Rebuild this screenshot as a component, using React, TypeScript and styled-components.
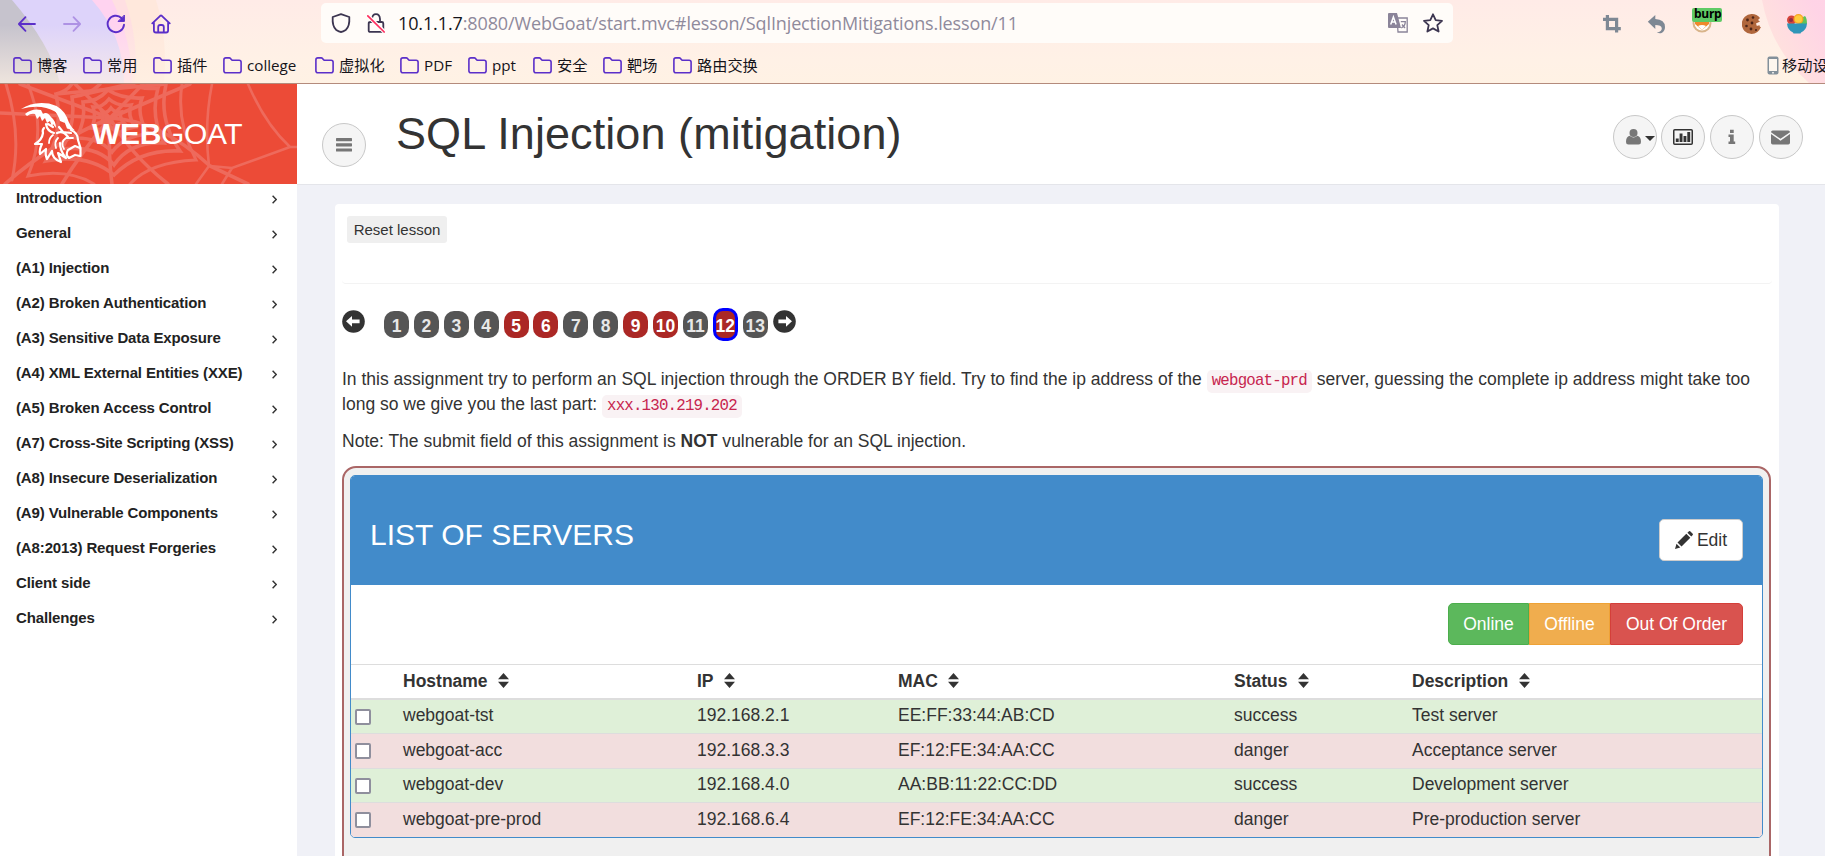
import React from "react";
import styled, { createGlobalStyle } from "styled-components";

const GlobalStyle = createGlobalStyle`
  * { box-sizing: border-box; }
  body { margin: 0; background: #f0f1f7; overflow: hidden; }
`;

const SANS = `"Liberation Sans", Arial, sans-serif`;
const UI = `"Open Sans", "Noto Sans CJK SC", sans-serif`;

const Window = styled.div`
  width: 1825px;
  height: 856px;
  overflow: hidden;
  display: flex;
  flex-direction: column;
  font-family: ${SANS};
  color: #333;
`;

/* ---------- browser chrome ---------- */

const Chrome = styled.header`
  position: relative;
  flex: none;
  height: 84px;
  border-bottom: 1px solid #b48b7c;
  background: linear-gradient(#ffebe7 0, #fff1e6 60px, #fff2e4 83px);
`;

const Backdrop = styled.svg`
  position: absolute;
  inset: 0;
`;

const Toolbar = styled.div`
  position: relative;
  display: flex;
  align-items: center;
  height: 47px;
  padding: 0 17px 0 17px;
`;

const NavGroup = styled.div`
  display: flex;
  gap: 24.7px;
  width: 304px;
  flex: none;
`;

const UrlBar = styled.div`
  display: flex;
  align-items: center;
  width: 1132px;
  height: 40px;
  margin-top: -1px;
  padding: 0 10px 0 10px;
  border-radius: 5px;
  background: #fffcf9;
  flex: none;
`;

const LockIcon = styled.svg`
  margin-left: 16px;
`;

const Url = styled.div`
  flex: 1;
  margin-left: 13px;
  font: 18px/24px ${UI};
  letter-spacing: -0.12px;
  color: #8f8a9c;
  white-space: nowrap;
  b { font-weight: 400; color: #15141a; }
`;

const UrlIcons = styled.div`
  display: flex;
  gap: 15px;
`;

const Extensions = styled.div`
  display: flex;
  flex: none;
  align-items: center;
  gap: 25px;
  margin-left: 149px;
`;

const BurpBox = styled.div`
  position: relative;
  width: 25px;
  height: 20px;
`;

const BurpBadge = styled.span`
  position: absolute;
  left: 0;
  top: -6px;
  width: 30px;
  height: 14px;
  padding-left: 2px;
  border-radius: 2px;
  background: #5fca66;
  color: #000;
  font: 700 12px/12px ${UI};
  letter-spacing: -0.3px;
`;

const Bookmarks = styled.nav`
  position: relative;
  display: flex;
  align-items: center;
  height: 36px;
  padding-left: 13px;
`;

const Bookmark = styled.div<{ $w: number }>`
  display: flex;
  align-items: center;
  gap: 5px;
  width: ${(p) => p.$w}px;
  flex: none;
  font: 15.2px/20px ${UI};
  color: #15141a;
  white-space: nowrap;
  svg { flex: none; }
`;

const MobileBookmark = styled(Bookmark)`
  gap: 3px;
  margin-left: auto;
`;

/* ---------- site frame ---------- */

const Site = styled.div`
  display: flex;
  flex: 1;
  min-height: 0;
`;

const Sidebar = styled.aside`
  width: 297px;
  flex: none;
  background: #fff;
`;

const Brand = styled.div`
  position: relative;
  height: 100px;
  background: #ec4b37;
  display: flex;
  align-items: center;
  padding-left: 19px;
  gap: 10px;
`;

const WebArt = styled.svg`
  position: absolute;
  inset: 0;
`;

const BrandMark = styled.svg`
  position: relative;
`;

const BrandName = styled.div`
  position: relative;
  color: #fff;
  font-size: 30px;
  letter-spacing: -0.35px;
  line-height: 36px;
`;

const Menu = styled.ul`
  list-style: none;
  margin: -1px 0 0;
  padding: 0;
`;

const MenuItem = styled.li`
  display: flex;
  align-items: center;
  justify-content: space-between;
  height: 35px;
  padding: 0 20px 7px 16px;
  font-size: 15px;
  font-weight: 700;
  letter-spacing: -0.13px;
  color: #222;
  svg { margin-top: 4px; }
`;

const Main = styled.main`
  flex: 1;
  display: flex;
  flex-direction: column;
`;

const TopBar = styled.div`
  display: flex;
  height: 101px;
  flex: none;
  background: #fff;
  border-bottom: 1px solid #e4e5ea;
  padding: 31px 22.5px 0 25px;
`;

const Title = styled.h1`
  flex: 1;
  margin: -6px 0 0 30px;
  font-size: 45px;
  line-height: 50px;
  letter-spacing: 0.08px;
  font-weight: 400;
`;

const RoundButton = styled.button<{ $low?: boolean }>`
  display: flex;
  align-items: center;
  justify-content: center;
  gap: 4px;
  width: 44px;
  height: 44px;
  padding: 0;
  margin-top: ${(p) => (p.$low ? 8 : 0)}px;
  border: 1px solid #c8c8c8;
  border-radius: 50%;
  background: #f5f5f5;
`;

const UserIcon = styled.svg`
  margin-left: 11px;
`;

const Caret = styled.svg`
  margin-top: 3px;
`;

const TopActions = styled.div`
  display: flex;
  gap: 4.6px;
`;

const Card = styled.section`
  margin: 19px 46px 0 38px;
  flex: 1;
  padding: 12px 7px 0 7px;
  background: #fff;
  border-radius: 4px 4px 0 0;
`;

const LessonTools = styled.div`
  height: 68px;
  padding: 0 5px;
  border-bottom: 1px solid #f3f3f3;
  border-radius: 0 0 4px 4px;
`;

const ResetButton = styled.button`
  display: block;
  width: 100px;
  height: 27px;
  border: 0;
  padding: 0;
  border-radius: 3px;
  background: #efefef;
  color: #333;
  font: 15px/27px ${SANS};
`;

const Pager = styled.div`
  display: flex;
  align-items: flex-start;
  margin-top: 24px;
  height: 33px;
`;

const Pages = styled.div`
  display: flex;
  gap: 4.9px;
  margin: 0 5px 0 19px;
`;

const PageBadge = styled.span<{ $kind: string }>`
  width: 25px;
  height: ${(p) => (p.$kind === "current" ? 33 : 27)}px;
  margin-top: ${(p) => (p.$kind === "current" ? 0 : 3)}px;
  border-radius: 10px;
  border: ${(p) => (p.$kind === "current" ? "3px solid #00f" : "0")};
  background: ${(p) => (p.$kind === "plain" ? "#555" : "#ab2825")};
  color: ${(p) => (p.$kind === "plain" ? "#e8e8e8" : "#fff")};
  font-size: 17.5px;
  font-weight: 700;
  line-height: 30px;
  display: flex;
  justify-content: center;
`;

const Arrow = styled.svg`
  margin-top: 2px;
  flex: none;
`;

const Text = styled.p`
  margin: 0 0 12px;
  font-size: 17.5px;
  line-height: 25px;
  letter-spacing: 0.008px;
`;

const Body = styled.div`
  padding-top: 26px;
`;

const Code = styled.code`
  padding: 2px 5px 3px;
  border-radius: 5px;
  background: #f9f2f4;
  color: #c7254e;
  font: 15.75px "Liberation Mono", monospace;
  letter-spacing: -0.8px;
`;

const Attack = styled.div`
  height: 420px;
  border: 2px solid #a66;
  border-radius: 14px;
  background: #f0f0f0;
  padding: 7px 6px;
  margin-right: 1px;
`;

const Panel = styled.div`
  border: 1px solid #428bca;
  border-radius: 5px;
  background: #fff;
  overflow: hidden;
`;

const PanelHead = styled.div`
  display: flex;
  justify-content: space-between;
  height: 109px;
  padding: 43px 19px 0 19px;
  background: #428bca;
`;

const PanelTitle = styled.h3`
  margin: -1px 0 0;
  font-size: 30px;
  line-height: 34px;
  font-weight: 400;
  color: #fff;
`;

const Button = styled.button`
  display: flex;
  align-items: center;
  justify-content: center;
  height: 42px;
  padding: 0;
  border: 1px solid #ccc;
  border-radius: 5px;
  background: #fff;
  color: #333;
  font: 17.5px/25px ${SANS};
`;

const EditButton = styled(Button)`
  width: 84px;
  gap: 4px;
`;

const Filters = styled.div`
  display: flex;
  justify-content: flex-end;
  height: 79px;
  padding: 18px 19px 0 0;
`;

const FilterButton = styled(Button)<{ $w: number; $bg: string; $edge: string; $pos: string }>`
  width: ${(p) => p.$w}px;
  background: ${(p) => p.$bg};
  border-color: ${(p) => p.$edge};
  color: #fff;
  border-radius: ${(p) => (p.$pos === "first" ? "5px 0 0 5px" : p.$pos === "last" ? "0 5px 5px 0" : "0")};
`;

const Table = styled.table`
  width: 100%;
  table-layout: fixed;
  border-collapse: separate;
  border-spacing: 0;
  font-size: 17.5px;
  line-height: 22px;
`;

const Col = styled.col<{ $w?: number }>`
  width: ${(p) => (p.$w ? `${p.$w}px` : "auto")};
`;

const Th = styled.th`
  height: 36px;
  padding: 0 6px 2px;
  text-align: left;
  vertical-align: middle;
  border-top: 1px solid #ddd;
  border-bottom: 2px solid #ddd;
  svg { margin-left: 10.5px; vertical-align: -1px; }
`;

const Row = styled.tr<{ $ok: boolean }>`
  background: ${(p) => (p.$ok ? "#dff0d8" : "#f2dede")};
`;

const Td = styled.td<{ $h: number }>`
  height: ${(p) => p.$h}px;
  padding: 0 6px 3px;
  vertical-align: middle;
  tr + tr & { border-top: 1px solid #ddd; }
`;

const CheckTd = styled(Td)`
  padding: 0 4px;
`;

const Check = styled.input`
  appearance: none;
  display: block;
  width: 16px;
  height: 16px;
  margin: 0;
  border: 2px solid #8f8f9d;
  border-radius: 2px;
  background: #fff;
`;

/* ---------- icons ---------- */

const PURPLE = "#5b2fc9";

const Folder = () => (
  <svg width="19" height="17" viewBox="0 0 19 17" fill="none" stroke={PURPLE} strokeWidth="1.6">
    <path d="M.9 13.7V2.9Q.9.9 2.9.9h3.2q.9 0 1.5.7l1 1.1q.5.6 1.4.6h6.1q2 0 2 2v8.4q0 2-2 2H2.9q-2 0-2-2z" />
  </svg>
);

const NavIcons = () => (
  <NavGroup>
    <svg width="20" height="20" viewBox="0 0 20 20" fill="none" stroke={PURPLE} strokeWidth="1.8" strokeLinecap="round" strokeLinejoin="round">
      <path d="M18 10H2M8.5 3.2 1.9 10l6.6 6.8" />
    </svg>
    <svg width="20" height="20" viewBox="0 0 20 20" fill="none" stroke="#ae92e4" strokeWidth="1.8" strokeLinecap="round" strokeLinejoin="round">
      <path d="M2 10h16M11.5 3.2 18.1 10l-6.6 6.8" />
    </svg>
    <svg width="20" height="20" viewBox="0 0 20 20" fill="none" stroke={PURPLE} strokeWidth="1.9" strokeLinecap="round">
      <path d="M15.5 4A8.2 8.2 0 1 0 18 10.8" />
      <path d="M18.4 1.4v6h-6z" fill={PURPLE} strokeWidth="1" strokeLinejoin="round" />
    </svg>
    <svg width="20" height="20" viewBox="0 0 20 20" fill="none" stroke={PURPLE} strokeWidth="1.8" strokeLinecap="round" strokeLinejoin="round">
      <path d="m1.3 9.4 7.9-7.6q.8-.7 1.6 0l7.9 7.6M2.9 8.5v8q0 2 2 2h10.2q2 0 2-2v-8" />
      <path d="M7.2 18v-5q0-2 2-2h1.6q2 0 2 2v5" />
    </svg>
  </NavGroup>
);

const Bars = () => (
  <svg width="16" height="14" viewBox="0 0 16 14" fill="#777">
    <rect y="0" width="16" height="3.2" rx=".6" />
    <rect y="5.2" width="16" height="3.2" rx=".6" />
    <rect y="10.400" width="16" height="3.2" rx=".6" />
  </svg>
);

const ArrowCircle = ({ flip }: { flip?: boolean }) => (
  <Arrow width="23" height="23" viewBox="0 0 23 23">
    <circle cx="11.5" cy="11.5" r="11.3" fill="#333" />
    <path
      d="M4 11.2 10 6v3.6h7.6v3.6H10v3.5z"
      fill="#fff"
      transform={flip ? "matrix(-1 0 0 1 23 0)" : undefined}
    />
  </Arrow>
);

const Sort = () => (
  <svg width="11" height="15" viewBox="0 0 11 15" fill="#333">
    <path d="M5.5 0 11 6.2H0zM5.5 15 0 8.8h11z" />
  </svg>
);

const Web = () => (
  <WebArt width="297" height="100" viewBox="0 0 297 100" fill="none" stroke="#ee6a5c" strokeLinecap="round">
    <g strokeWidth="3.6">
      <path d="M110 34 0 29M110 34 20 0M110 34 75 0M110 34 143 0M110 34 190 0M110 34Q160 36 210 82L248 100M110 34Q130 70 168 100M110 34Q108 70 112 100M110 34Q80 70 62 100M110 34Q50 60 5 100" />
      <path d="M212 0Q204 40 209 82L196 100M248 0Q265 40 290 63L232 84 210 82M290 63 297 63M232 84 222 100" strokeWidth="2.600" />
    </g>
    <g strokeWidth="3.600">
      <path d="M102 28q5 2 9-4 4 5 10 4-2 6 3 11-8 0-11 6-5-5-11-6 2-6 0-11z" />
      <path d="M93 23q9 1 16-8 9 8 22 6-4 10 4 22-15 2-22 12-7-10-22-11 6-9 2-21z" />
      <path d="M83 18q14 0 25-12 14 9 34 8-6 16 6 36-24 2-36 18-12-14-36-14 10-16 7-36z" />
      <path d="M72 13q18-2 28-13M130 0q12 6 28 4-8 28 6 55-34-2-50 22-16-20-52-16 14-24 10-52z" />
      <path d="M56 10q10-2 16-10M166 0q-8 36 14 67-40-2-66 24-26-22-68-14 18-30 10-67z" />
      <path d="M182 0q-6 38 14 76-46 2-66 24M94 100q-26-16-66-8 14-34 8-66-4-16-8-26" strokeWidth="3" />
      <path d="M6 0q16 50 6 96" strokeWidth="3" />
    </g>
  </WebArt>
);

const Goat = () => (
  <BrandMark width="63" height="64" viewBox="0 0 63 64" fill="#fff">
    <path d="M2 7Q14-1 30 1.500q13 3 18 14 3 9 8 13l-8-2q-3-11-12-17Q22 1.500 2 7z" />
    <path d="M33 5q10 4 13 16l-5-2q-2-7-8-14z" />
    <path d="M6 12Q13 6 22 8l2 4q4-3 8 3 5 4 5 11l-3-4-1 3-2-6-3 2-2-5-3 3-2-5-3 3-2-5q-4-1-8 2z" />
    <g fill="none" stroke="#fff" strokeWidth="2.200" strokeLinecap="round" strokeLinejoin="round">
      <path d="M27 22q1 7 8 9M29 22l5 3M24 31q-1-3 1-5" />
      <path d="M40 25l4 5 8 1M38 31q6-3 11 4M52 28q7 3 7 10l2.500 8v8" />
      <path d="M61 46l-5-2-7 4q-3 5 1 8l6-3M61 54l-5-1" />
      <path d="M24 31q-1 7-8 11l7 0q-3 6-2 10l6-5q-1 6 1 10l5-8q0 8 9 11l-3-9 8 5q-6-7-6-15" />
      <path d="M30 41q0-5 4-8M37 46q-2-6 2-10M45 47q-4-7 2-11l7 0" strokeWidth="1.800" />
    </g>
  </BrandMark>
);

const menu = [
  "Introduction",
  "General",
  "(A1) Injection",
  "(A2) Broken Authentication",
  "(A3) Sensitive Data Exposure",
  "(A4) XML External Entities (XXE)",
  "(A5) Broken Access Control",
  "(A7) Cross-Site Scripting (XSS)",
  "(A8) Insecure Deserialization",
  "(A9) Vulnerable Components",
  "(A8:2013) Request Forgeries",
  "Client side",
  "Challenges",
];

const bookmarks: [string, number][] = [
  ["博客", 70],
  ["常用", 70],
  ["插件", 70],
  ["college", 92],
  ["虚拟化", 85],
  ["PDF", 68],
  ["ppt", 65],
  ["安全", 70],
  ["靶场", 70],
  ["路由交换", 90],
];

const solved = [5, 6, 9, 10];
const pages = Array.from({ length: 13 }, (_, i) => i + 1);

const servers = [
  ["webgoat-tst", "192.168.2.1", "EE:FF:33:44:AB:CD", "success", "Test server"],
  ["webgoat-acc", "192.168.3.3", "EF:12:FE:34:AA:CC", "danger", "Acceptance server"],
  ["webgoat-dev", "192.168.4.0", "AA:BB:11:22:CC:DD", "success", "Development server"],
  ["webgoat-pre-prod", "192.168.6.4", "EF:12:FE:34:AA:CC", "danger", "Pre-production server"],
];
const rowHeights = [33, 35, 34, 35];

export default function App() {
  return (
    <Window>
      <GlobalStyle />
      <Chrome>
        <Backdrop width="1825" height="83" viewBox="0 0 1825 83">
          <defs>
            <linearGradient id="fade" x1="0" y1="0" x2="0" y2="1">
              <stop offset="0.3" stopColor="#fff2e4" stopOpacity="0" />
              <stop offset="1" stopColor="#fff2e4" stopOpacity="0.7" />
            </linearGradient>
            <linearGradient id="pink" x1="0" y1="1" x2="1" y2="0.3">
              <stop offset="0.2" stopColor="#ffe2da" />
              <stop offset="1" stopColor="#ffcfe6" />
            </linearGradient>
          </defs>
          <path d="M0 0h156q12 40 8 83H0z" fill="#ffe8dc" />
          <path d="M0 0h125q14 40 10 83H0z" fill="#ffdfe2" />
          <path d="M0 0h112q20 40 20 83H0z" fill="#ffd3f0" />
          <path d="M0 0h92q32 36 32 83H0z" fill="#ddd3fa" />
          <path d="M0 0h12q38 44 48 83H0z" fill="#c6c3cd" />
          <path d="M0 0h170v83H0z" fill="url(#fade)" />
          <path d="M1762 0h63v83h-16q-38-34-47-83z" fill="url(#pink)" opacity="0.85" />
        </Backdrop>
        <Toolbar>
          <NavIcons />
          <UrlBar>
            <svg width="20" height="20" viewBox="0 0 20 20" fill="none" stroke="#3c3550" strokeWidth="1.8" strokeLinejoin="round">
              <path d="M10 1.2 18.3 4q.6 9.500-3.600 13-2.700 1.900-4.700 2-2-.1-4.700-2Q1.100 13.500 1.700 4z" />
            </svg>
            <LockIcon width="18" height="20" viewBox="0 0 18 20" fill="none">
              <path d="M5 9V6q.3-4.800 4-4.800T13 6v3M3.600 9h11.200q1.500 0 1.500 1.500v6.900q0 1.500-1.500 1.500H3.200q-1.500 0-1.500-1.500v-6.900Q1.700 9 3.600 9z" stroke="#3c3550" strokeWidth="1.8" />
              <path d="m.8 2.800 16.400 16" stroke="#fffcf9" strokeWidth="4" />
              <path d="m.8 2.800 16.400 16.200" stroke="#ff2d5f" strokeWidth="1.700" strokeLinecap="round" />
            </LockIcon>
            <Url>
              <b>10.1.1.7</b>:8080/WebGoat/start.mvc#lesson/SqlInjectionMitigations.lesson/11
            </Url>
            <UrlIcons>
              <svg width="20" height="20" viewBox="0 0 20 20">
                <path d="M9 5h10.200v14H10z" fill="#fffcf9" stroke="#8b8499" strokeWidth="1.300" />
                <path d="M1 0h8l4 15H1q-1 0-1-1V1q0-1 1-1z" fill="#8b8499" />
                <path d="M2.700 11.500 5.400 4l2.700 7.500M3.600 9h3.600" stroke="#fff" strokeWidth="1.500" fill="none" />
                <path d="M12.800 8.700h4.500q0 4-4 6.300M14 11.500l3 3.500" stroke="#8b8499" strokeWidth="1.300" fill="none" />
              </svg>
              <svg width="20" height="20" viewBox="0 0 20 20" fill="none" stroke="#3c3550" strokeWidth="1.800" strokeLinejoin="round">
                <path d="m10 1.300 2.700 5.800 6.300.7-4.700 4.300 1.300 6.400L10 15.400l-5.600 3.100 1.300-6.400L1 7.800l6.300-.7z" />
              </svg>
            </UrlIcons>
          </UrlBar>
          <Extensions>
            <svg width="20" height="20" viewBox="0 0 20 20" fill="none" stroke="#7e8894" strokeWidth="3.200">
              <path d="M1 5.400h13.600V18.500M5.400 1v13.600H18.800" />
            </svg>
            <svg width="20" height="20" viewBox="0 0 20 20" fill="#7e8894">
              <path d="M.8 7.700 8.300 1v4q9.700.5 9.700 8 0 4-3.500 6-2 .800-4.700-.5 5.200-.6 5-4.200-.4-3.300-6.500-3.300v4z" />
            </svg>
            <BurpBox>
              <svg width="20" height="20" viewBox="0 0 20 20">
                <circle cx="10" cy="9" r="9.500" fill="#d9b48a" />
                <circle cx="10" cy="9" r="7.500" fill="#fff" />
                <path d="M3 3l4 2h6l4-2v7l-7 6-7-6z" fill="#ef8a2c" />
                <path d="M6 12q4-2 8 0l-4 4z" fill="#fff" />
              </svg>
              <BurpBadge>burp</BurpBadge>
            </BurpBox>
            <svg width="20" height="20" viewBox="0 0 20 20">
              <path d="M10 0q5 0 8 4l-2 2 2 1.500-4 2 1 3 4 .5q-3 7-9.500 7A9.900 9.900 0 0 1 10 0z" fill="#b0663c" />
              <g fill="#4b2418">
                <circle cx="5.500" cy="6" r="1.400" />
                <circle cx="11" cy="3.500" r="1.300" />
                <circle cx="10" cy="9" r="1.400" />
                <circle cx="4.500" cy="12" r="1.300" />
                <circle cx="9" cy="15" r="1.400" />
                <circle cx="14" cy="16" r="1" />
              </g>
              <path d="m14.500 12 3-.8.500 2-3 .5z" fill="#b0663c" />
            </svg>
            <svg width="20" height="20" viewBox="0 0 20 20">
              <circle cx="4.500" cy="6" r="4.500" fill="#d6453b" />
              <circle cx="4" cy="6" r="2" fill="#8d2f45" />
              <path d="M12 5q4-2 6-3 2 2 2 8h-8z" fill="#5fc35a" />
              <circle cx="11.500" cy="5" r="5" fill="#f5a623" />
              <circle cx="11.500" cy="5" r="3.700" fill="#ffcb3d" />
              <path d="M0 9.500h20q-.5 6.500-6 9l-.5 1h-7l-.5-1Q.500 16 0 9.500z" fill="#2f96b8" />
            </svg>
          </Extensions>
        </Toolbar>
        <Bookmarks>
          {bookmarks.map(([name, w]) => (
            <Bookmark key={name} $w={w}>
              <Folder />
              {name}
            </Bookmark>
          ))}
          <MobileBookmark $w={58}>
            <svg width="12" height="19" viewBox="0 0 12 19">
              <rect x=".5" y=".5" width="11" height="18" rx="2" fill="#83909a" />
              <rect x="2" y="3" width="8" height="12" fill="#fdf6ee" />
              <rect x="5" y="16" width="2" height="1.500" fill="#e5e5e5" />
            </svg>
            移动设
          </MobileBookmark>
        </Bookmarks>
      </Chrome>

      <Site>
        <Sidebar>
          <Brand>
            <Web />
            <Goat />
            <BrandName>
              <b>WEB</b>GOAT
            </BrandName>
          </Brand>
          <Menu>
            {menu.map((item) => (
              <MenuItem key={item}>
                {item}
                <svg width="5" height="9" viewBox="0 0 5 9" fill="none" stroke="#333" strokeWidth="1.400">
                  <path d="m.6.7 3.600 3.800L.6 8.300" />
                </svg>
              </MenuItem>
            ))}
          </Menu>
        </Sidebar>

        <Main>
          <TopBar>
            <RoundButton $low>
              <Bars />
            </RoundButton>
            <Title>SQL Injection (mitigation)</Title>
            <TopActions>
              <RoundButton>
                <UserIcon width="15" height="16" viewBox="0 0 15 16" fill="#777">
                  <circle cx="7.500" cy="4" r="4" />
                  <path d="M3.600 6.800q3.900 3.400 7.800 0 3.600.9 3.600 6.200 0 2.500-2.400 2.500H2.400Q0 15.500 0 13q0-5.300 3.600-6.200z" />
                </UserIcon>
                <Caret width="10" height="5" viewBox="0 0 10 5" fill="#333">
                  <path d="M0 0h10L5 5z" />
                </Caret>
              </RoundButton>
              <RoundButton>
                <svg width="20" height="16" viewBox="0 0 20 16" fill="#333">
                  <rect x=".75" y=".75" width="18.500" height="14.500" rx="1" fill="none" stroke="#333" strokeWidth="1.500" />
                  <path d="M2.800 9.500h2.900V13H2.800zM6.600 4.500h2.900V13H6.600zM10.500 7h2.900v6h-2.900zM14.300 3h2.900v10h-2.900z" />
                </svg>
              </RoundButton>
              <RoundButton>
                <svg width="8" height="16" viewBox="0 0 8 16" fill="#777">
                  <path d="M2 .700h3.700v3.300H2zM.500 5.500h5.200v7H7.200V15H.500v-2.500H2v-4.500H.500z" />
                </svg>
              </RoundButton>
              <RoundButton>
                <svg width="19" height="15" viewBox="0 0 19 15" fill="#777">
                  <path d="M0 2.200Q0 .500 1.700.500h15.600Q19 .500 19 2.200L9.500 8.800zM0 4l9.500 6.700L19 4v8.800q0 1.700-1.700 1.700H1.700Q0 14.500 0 12.800z" />
                </svg>
              </RoundButton>
            </TopActions>
          </TopBar>

          <Card>
            <LessonTools>
              <ResetButton>Reset lesson</ResetButton>
            </LessonTools>
            <Pager>
              <ArrowCircle />
              <Pages>
                {pages.map((n) => (
                  <PageBadge key={n} $kind={n === 12 ? "current" : solved.includes(n) ? "solved" : "plain"}>
                    {n}
                  </PageBadge>
                ))}
              </Pages>
              <ArrowCircle flip />
            </Pager>
            <Body>
              <Text>
                In this assignment try to perform an SQL injection through the ORDER BY field. Try to find the ip address
                of the <Code>webgoat-prd</Code> server, guessing the complete ip address might take too long so we give
                you the last part: <Code>xxx.130.219.202</Code>
              </Text>
              <Text>
                Note: The submit field of this assignment is <b>NOT</b> vulnerable for an SQL injection.
              </Text>
              <Attack>
                <Panel>
                  <PanelHead>
                    <PanelTitle>LIST OF SERVERS</PanelTitle>
                    <EditButton>
                      <svg width="18" height="18" viewBox="0 0 18 18" fill="#333">
                        <path d="M0 18l1.500-5.300 3.800 3.800zM2.500 11.500l8.800-8.800 4 4-8.800 8.800zM12.400 1.700 14 .3q.6-.5 1.200 0l2.500 2.500q.5.600 0 1.200l-1.400 1.600z" />
                      </svg>
                      Edit
                    </EditButton>
                  </PanelHead>
                  <Filters>
                    <FilterButton $w={81} $bg="#5cb85c" $edge="#4cae4c" $pos="first">Online</FilterButton>
                    <FilterButton $w={81} $bg="#f0ad4e" $edge="#eea236" $pos="mid">Offline</FilterButton>
                    <FilterButton $w={133} $bg="#d9534f" $edge="#d43f3a" $pos="last">Out Of Order</FilterButton>
                  </Filters>
                  <Table>
                    <colgroup>
                      <Col $w={46} />
                      <Col $w={294} />
                      <Col $w={201} />
                      <Col $w={336} />
                      <Col $w={178} />
                      <Col />
                    </colgroup>
                    <thead>
                      <tr>
                        <Th />
                        {["Hostname", "IP", "MAC", "Status", "Description"].map((h) => (
                          <Th key={h}>
                            {h}
                            <Sort />
                          </Th>
                        ))}
                      </tr>
                    </thead>
                    <tbody>
                      {servers.map((server, i) => (
                        <Row key={server[0]} $ok={server[3] === "success"}>
                          <CheckTd $h={rowHeights[i]}>
                            <Check type="checkbox" />
                          </CheckTd>
                          {server.map((value) => (
                            <Td key={value} $h={rowHeights[i]}>
                              {value}
                            </Td>
                          ))}
                        </Row>
                      ))}
                    </tbody>
                  </Table>
                </Panel>
              </Attack>
            </Body>
          </Card>
        </Main>
      </Site>
    </Window>
  );
}
